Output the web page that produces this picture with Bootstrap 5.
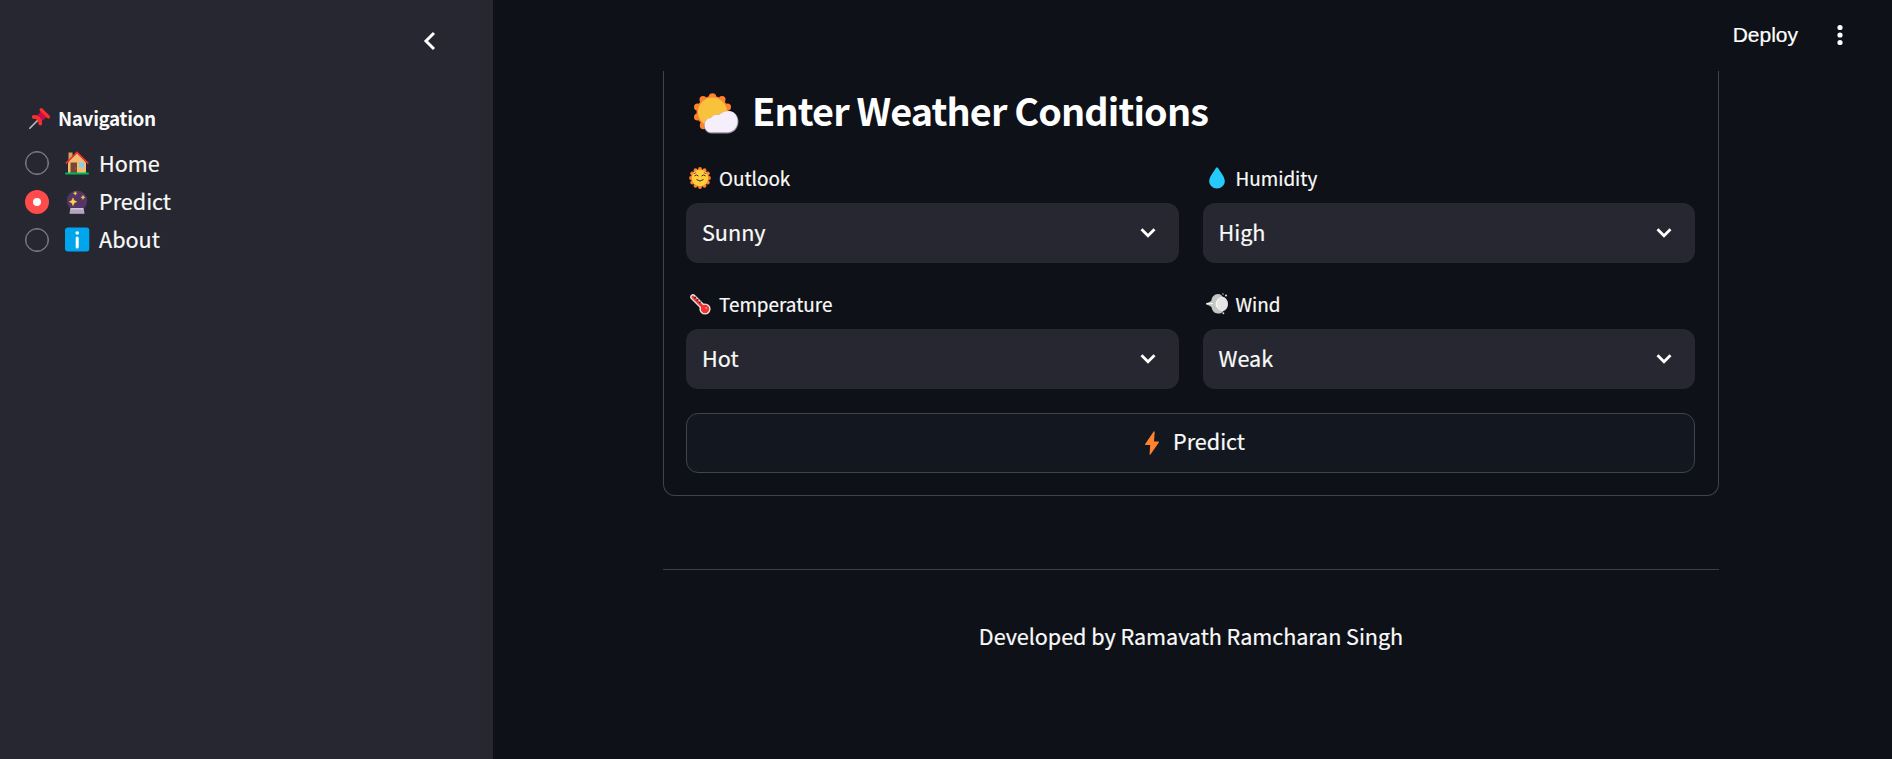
<!DOCTYPE html>
<html lang="en" data-bs-theme="dark">
<head>
<meta charset="utf-8">
<meta name="viewport" content="width=device-width, initial-scale=1">
<title>Weather Prediction</title>
<link href="https://cdn.jsdelivr.net/npm/bootstrap@5.3.0/dist/css/bootstrap.min.css" rel="stylesheet">
<style>
  body { background: #0e1117; color: #fafafa; font-family: "Noto Sans CJK SC", "Noto Sans", sans-serif; font-size: 21.6px; -webkit-text-stroke: .2px; }
  svg { display: block; flex: none; overflow: visible; }
  .sidebar { width: 493px; background: #262730; }
  .sidebar-head { height: 82px; padding-left: 424px; }
  .side-title { height: 24px; line-height: 24px; margin: 24px 0 21px; padding-left: 29px; font-size: 18.9px; font-weight: 700; letter-spacing: -.35px; -webkit-text-stroke: 0; }
  .side-title span { margin-left: 8px; }
  .side-nav { gap: 14.5px; padding-left: 25px; }
  .side-item { height: 24px; line-height: 24px; }
  .dial { width: 24px; height: 24px; border: 1px solid #82838a; border-radius: 50%; margin-right: 16px; box-shadow: inset 0 0 0 .4px #82838a; }
  .dial.on { border: 8px solid #ff4b4b; background: #fafafa; box-shadow: none; }
  .side-item .lbl { margin-left: 10px; }
  .side-item + .side-item .lbl { margin-bottom: 2px; }
  .topbar { height: 71px; padding: 0 49px 1px 0; gap: 39px; font: 21px "Liberation Sans", sans-serif; color: #fff; }
  .content { width: 1056px; margin-left: 170px; }
  .form-panel { border: 1px solid #41444c; border-top: 0; border-radius: 0 0 12px 12px; padding: 14px 23px 22px 22px; }
  .form-title { height: 50px; line-height: 50px; margin-bottom: 31px; padding-left: 8px; font-size: 37.8px; font-weight: 700; letter-spacing: -.87px; -webkit-text-stroke: 0; }
  .form-title svg { margin-top: 8px; }
  .form-title span { margin-left: 13px; }
  .form-grid { --bs-gutter-x: 24px; --bs-gutter-y: 29px; margin-bottom: 24px; }
  .field-label { height: 24px; line-height: 24px; margin-bottom: 13px; font-size: 18.9px; }
  .field-icon { width: 33px; padding-left: 3px; }
  .picker { height: 60px; border-radius: 12px; background: #262730; padding: 0 23px 0 16px; }
  .picker span { position: relative; top: -1px; }
  .go, .go:hover { height: 60px; border: 1px solid #41444c; border-radius: 12px; background: #131720; color: #fafafa; font-size: 21.6px; }
  .go svg { margin-left: 9px; }
  .go span { margin: 0 0 3px 14px; }
  .divider { height: 1px; background: #3d3f44; margin-top: 73px; }
  .credit { margin-top: 49px; line-height: 34px; letter-spacing: -.05px; }
</style>
</head>
<body class="d-flex vh-100 overflow-hidden">
<aside class="sidebar flex-shrink-0">
  <div class="sidebar-head d-flex align-items-center">
    <svg width="11" height="18" viewBox="0 0 11 18" fill="none" stroke="#fff" stroke-width="3"><path d="M10 1 2 9l8 8"/></svg>
  </div>
  <div class="side-title d-flex align-items-center">
    <svg width="21" height="21" viewBox="0 0 21 21"><path d="M.8 20.2 8.5 12.5" stroke="#bebebe" stroke-width="1.6" stroke-linecap="round"/><path d="m7.5 8.5 4.8-5.7 5.8 5.9-5.8 4.7z" fill="#ca0b4a"/><path d="m12.2 1.7 7.2 7.2" stroke="#f8312f" stroke-width="3.4" stroke-linecap="round"/><path d="M4.8 9c3.4-.5 6.7 2.8 6.5 6.6" stroke="#f8312f" stroke-width="3.8" stroke-linecap="round" fill="none"/></svg>
    <span>Navigation</span>
  </div>
  <nav class="side-nav d-flex flex-column">
    <div class="side-item d-flex align-items-center"><span class="dial"></span>
      <svg width="24" height="24" viewBox="0 0 24 24"><path d="M3.500 1.500h4V10h-4z" fill="#d3a05e"/><path d="m12 2 9 9.500V22H3V11.500z" fill="#f3bd71"/><path d="M5.500 11.500h6.500V22H5.500z" fill="#7d4533"/><path d="M14 11.500h5v5h-5z" fill="#83cbff"/><path d="m1.200 12 10.800-10.600L22.800 12" fill="none" stroke="#f8312f" stroke-width="1.700" stroke-linecap="round"/><path d="M1 22.500h22" stroke="#00b65a" stroke-width="2" stroke-linecap="round"/><circle cx="10.700" cy="17" r=".6" fill="#d3883e"/></svg>
      <span class="lbl">Home</span></div>
    <div class="side-item d-flex align-items-center"><span class="dial on"></span>
      <svg width="24" height="24" viewBox="0 0 24 24"><circle cx="12" cy="10.800" r="10.200" fill="#533566"/><path d="M5.500 18h13l1 5.500h-15z" fill="#cdc4d6"/><path d="M5 19.500h14v4H5z" fill="#b4a4c2"/><path d="m8 7.800 1.200 2.700 2.700 1.200-2.700 1.200L8 15.800l-1.200-2.900-2.700-1.200 2.700-1.200zM10.200 1.500l.6 1.200 1.200.6-1.200.6-.6 1.300-.6-1.300-1.200-.6 1.200-.6zM18 5.200l.6 1.500 1.500.6-1.500.6-.6 1.600-.6-1.600-1.500-.6 1.500-.6z" fill="#fcd53f" stroke="#fcd53f" stroke-width=".4"/></svg>
      <span class="lbl">Predict</span></div>
    <div class="side-item d-flex align-items-center"><span class="dial"></span>
      <svg width="24" height="24" viewBox="0 0 24 24"><rect width="24.300" height="24" y="-.5" rx="3" fill="#00a6ed"/><circle cx="12.200" cy="5" r="1.800" fill="#fff"/><path d="M12.200 10v9" stroke="#fff" stroke-width="3" stroke-linecap="round"/></svg>
      <span class="lbl">About</span></div>
  </nav>
</aside>
<main class="flex-grow-1">
  <header class="topbar d-flex align-items-center justify-content-end">
    <span>Deploy</span>
    <svg width="6" height="22" viewBox="0 0 6 22" fill="#fff"><circle cx="3" cy="3.500" r="2.600"/><circle cx="3" cy="11" r="2.600"/><circle cx="3" cy="18.500" r="2.600"/></svg>
  </header>
  <div class="content">
    <section class="form-panel">
      <h2 class="form-title d-flex align-items-center">
        <svg width="45" height="42" viewBox="0 0 45 42"><g fill="#ff822d"><circle cx="18.500" cy="19" r="16"/><circle cx="18.500" cy="4" r="3.800"/><circle cx="9" cy="6.500" r="3.500"/><circle cx="28" cy="6.500" r="3.500"/><circle cx="3.500" cy="14" r="3.500"/><circle cx="33.500" cy="14" r="3.500"/><circle cx="3.500" cy="24" r="3.500"/><circle cx="9.500" cy="32.500" r="3.700"/></g><circle cx="18.500" cy="19" r="14.500" fill="#f9c23c"/><path d="M17.500 40.500C8 40.500 8 25 17 25c1.500-3 5-4 8-3 9-8 19.500-3 19.500 6.500 0 7-5 12-11 12z" fill="#998ea4"/><path d="M17.500 39.300C8.500 39.300 8.500 25 17 25c1.500-3 5-4 8-3 9-8 18.500-3 18.500 6 0 7-4.500 11.300-10.500 11.300z" fill="#f4effa"/></svg>
        <span>Enter Weather Conditions</span>
      </h2>
      <div class="row form-grid">
        <div class="col-6">
          <div class="field-label d-flex align-items-center"><div class="field-icon">
            <svg width="22" height="22" viewBox="0 0 22 22"><g fill="#ff822d"><circle cx="11" cy="11" r="9"/><circle cx="11" cy="2" r="1.900"/><circle cx="15.500" cy="3.200" r="1.900"/><circle cx="18.800" cy="6.500" r="1.900"/><circle cx="20" cy="11" r="1.900"/><circle cx="18.800" cy="15.500" r="1.900"/><circle cx="15.500" cy="18.800" r="1.900"/><circle cx="11" cy="20" r="1.900"/><circle cx="6.500" cy="18.800" r="1.900"/><circle cx="3.200" cy="15.500" r="1.900"/><circle cx="2" cy="11" r="1.900"/><circle cx="3.200" cy="6.500" r="1.900"/><circle cx="6.500" cy="3.200" r="1.900"/></g><circle cx="11" cy="11" r="8.200" fill="#ffcf3d"/><g fill="none" stroke="#402a32" stroke-width="1" stroke-linecap="round"><path d="M5.700 8.700q1.700-1.800 3.400 0M12.900 8.700q1.700-1.800 3.400 0M7.800 12.800q3.200 2.700 6.400 0"/><path d="m5.200 6.700 1.600-1M16.800 6.700l-1.600-1" stroke-width=".7"/></g></svg></div><span>Outlook</span></div>
          <div class="picker d-flex align-items-center justify-content-between"><span>Sunny</span><svg width="16" height="10" viewBox="0 0 16 10" fill="none" stroke="#fff" stroke-width="2.800"><path d="m1.500 1.200 6.500 6.500 6.500-6.500"/></svg></div>
        </div>
        <div class="col-6">
          <div class="field-label d-flex align-items-center"><div class="field-icon">
            <svg width="22" height="22" viewBox="0 0 22 22"><path d="M11 .5C12 .5 12.300 1.200 12.700 2 15 6 18.800 10 18.800 14.300c0 4-3.600 7.200-7.800 7.200s-7.800-3.200-7.800-7.200C3.200 10 7 6 9.300 2c.4-.8.7-1.500 1.700-1.500z" fill="#26c9fc"/></svg></div><span>Humidity</span></div>
          <div class="picker d-flex align-items-center justify-content-between"><span>High</span><svg width="16" height="10" viewBox="0 0 16 10" fill="none" stroke="#fff" stroke-width="2.800"><path d="m1.500 1.200 6.500 6.500 6.500-6.500"/></svg></div>
        </div>
        <div class="col-6">
          <div class="field-label d-flex align-items-center"><div class="field-icon">
            <svg width="22" height="22" viewBox="0 0 22 22"><path d="M4 4 15 15" stroke="#e6e6e6" stroke-width="5.600" stroke-linecap="round"/><circle cx="16" cy="16" r="5.600" fill="#e6e6e6"/><path d="M4 4 15 15" stroke="#f8312f" stroke-width="3" stroke-linecap="round"/><circle cx="16" cy="16" r="4.200" fill="#f8312f"/><path d="m7 3.800-1.600 1.500M9.300 6.200 7.700 7.700M11.700 8.600l-1.600 1.500" stroke="#212121" stroke-width="1.100"/><circle cx="17.200" cy="15" r="1.100" fill="#ff8687"/></svg></div><span>Temperature</span></div>
          <div class="picker d-flex align-items-center justify-content-between"><span>Hot</span><svg width="16" height="10" viewBox="0 0 16 10" fill="none" stroke="#fff" stroke-width="2.800"><path d="m1.500 1.200 6.500 6.500 6.500-6.500"/></svg></div>
        </div>
        <div class="col-6">
          <div class="field-label d-flex align-items-center"><div class="field-icon">
            <svg width="22" height="22" viewBox="0 0 22 22"><path d="M0 10c3-.2 4.500-1.300 5.500-2.500C5.500 4 8.500 1 12 1c2.500 0 4 1.500 5 3 3 1 5 4 5 7s-1.500 6-4.500 7c-1.500 2-3 2.500-5.500 2.500-3.500 0-6-2.800-6.300-6C4.500 13 3 12 0 11.500z" fill="#c5c5c5"/><path d="M12 6c1-2.500 6-3.500 8 0 2.500 2.500 2.200 8-.5 10-2 3-6.500 2.500-8-.5-3-2.500-2.500-7 .5-9.500z" fill="#e6e6e6"/><path d="M1 10.700h6M13 6.200c-3 1.700-3.300 6.800-.5 8.700" fill="none" stroke="#fff" stroke-width="1"/><circle cx="20" cy="2.500" r="1.100" fill="#d3d3d3"/><circle cx="17" cy="1.100" r=".8" fill="#aaa"/><circle cx="17.300" cy="20.300" r="1" fill="#d3d3d3"/></svg></div><span>Wind</span></div>
          <div class="picker d-flex align-items-center justify-content-between"><span>Weak</span><svg width="16" height="10" viewBox="0 0 16 10" fill="none" stroke="#fff" stroke-width="2.800"><path d="m1.500 1.200 6.500 6.500 6.500-6.500"/></svg></div>
        </div>
      </div>
      <button type="button" class="btn go w-100 d-flex align-items-center justify-content-center p-0">
        <svg width="14" height="24" viewBox="0 0 14 24"><path d="M8.500.8c.5-1 1.300-.7 1.200.3L9 10.500h4.200c.7 0 .9.500.6 1.100L5.700 23.300c-.5.800-1.200.5-1.100-.4l.6-8.900H.8c-.7 0-.9-.5-.6-1.100z" fill="#ff822d"/></svg>
        <span>Predict</span>
      </button>
    </section>
    <div class="divider"></div>
    <p class="credit text-center mb-0">Developed by Ramavath Ramcharan Singh</p>
  </div>
</main>
<script src="https://cdn.jsdelivr.net/npm/bootstrap@5.3.0/dist/js/bootstrap.bundle.min.js"></script>
</body>
</html>
